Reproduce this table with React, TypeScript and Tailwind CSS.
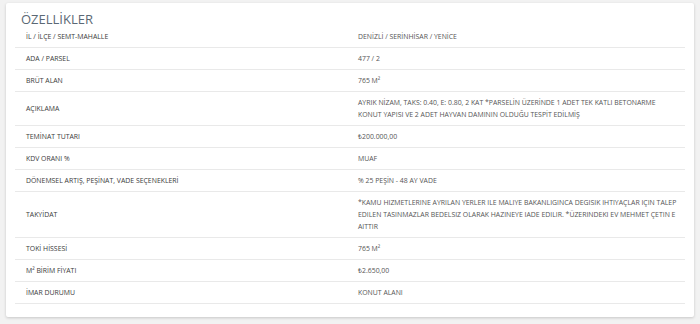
const rows: [string, string][] = [
  ["İL / İLÇE / SEMT-MAHALLE", "DENİZLİ / SERİNHİSAR / YENİCE"],
  ["ADA / PARSEL", "477 / 2"],
  ["BRÜT ALAN", "765 M²"],
  [
    "AÇIKLAMA",
    "AYRIK NİZAM, TAKS: 0.40, E: 0.80, 2 KAT *PARSELİN ÜZERİNDE 1 ADET TEK KATLI BETONARME\nKONUT YAPISI VE 2 ADET HAYVAN DAMININ OLDUĞU TESPİT EDİLMİŞ",
  ],
  ["TEMİNAT TUTARI", "₺200.000,00"],
  ["KDV ORANI %", "MUAF"],
  ["DÖNEMSEL ARTIŞ, PEŞİNAT, VADE SEÇENEKLERİ", "% 25 PEŞİN - 48 AY VADE"],
  [
    "TAKYİDAT",
    "*KAMU HIZMETLERINE AYRILAN YERLER ILE MALIYE BAKANLIGINCA DEGISIK IHTIYAÇLAR IÇIN TALEP EDILEN TASINMAZLAR BEDELSIZ OLARAK HAZINEYE IADE EDILIR. *ÜZERINDEKI EV MEHMET ÇETIN E AITTIR",
  ],
  ["TOKİ HİSSESİ", "765 M²"],
  ["M² BİRİM FİYATI", "₺2.650,00"],
  ["İMAR DURUMU", "KONUT ALANI"],
];

export default function App() {
  return (
    <div className="h-[324px] w-[700px] bg-[#f2f2f2] pl-[6px] pt-[3px] font-['Open_Sans',sans-serif]">
      <div className="w-[688px] rounded-[2px] bg-white px-[9px] pt-[9px] pb-[13px] shadow-[0_1px_3px_rgba(0,0,0,0.18)]">
        <h2 className="pl-[6px] text-[13px] leading-[14px] text-[#5b6875]">ÖZELLİKLER</h2>
        <table className="w-full table-fixed border-collapse text-[6.9px] leading-[12px]">
          <tbody>
            {rows.map(([label, value]) => (
              <tr key={label} className="border-b border-[#e9e9e9]">
                <td className="w-[335px] pt-[5px] pb-[4px] pl-[11px] align-middle text-[#3a3a3a]">{label}</td>
                <td className="whitespace-pre-line pt-[5px] pb-[4px] pl-[8px] pr-0 align-middle text-[#555]">
                  {value}
                </td>
              </tr>
            ))}
          </tbody>
        </table>
      </div>
    </div>
  );
}
